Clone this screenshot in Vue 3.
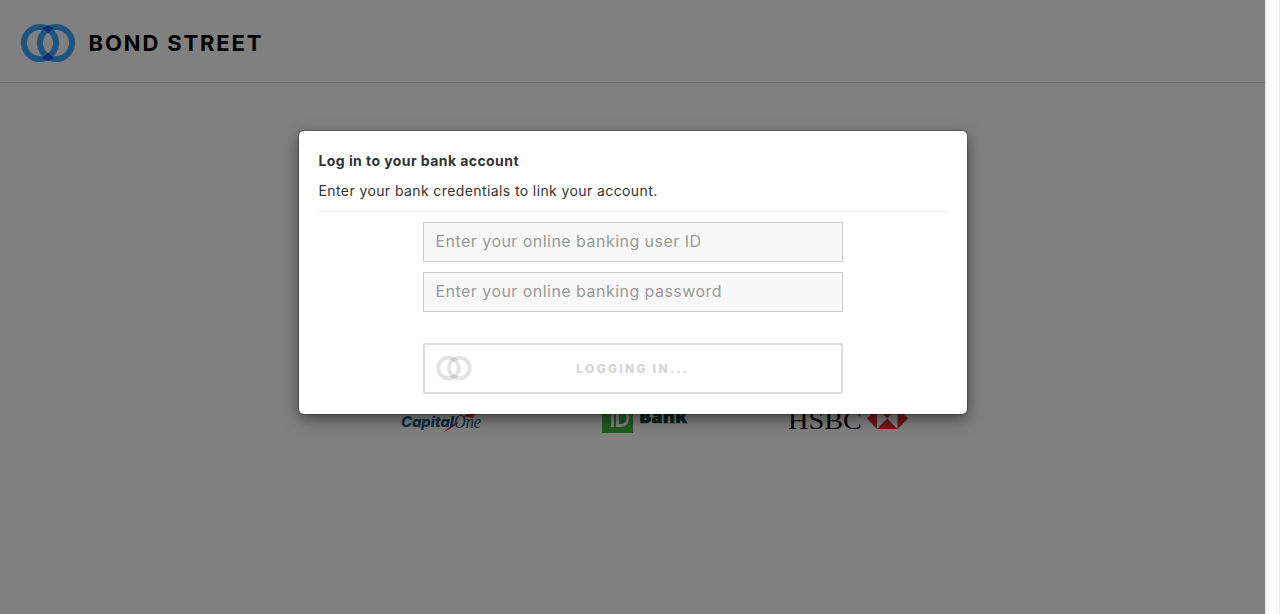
<script setup>
const fields = [
  { id: 'user', type: 'text', placeholder: 'Enter your online banking user ID' },
  { id: 'password', type: 'password', placeholder: 'Enter your online banking password' },
]
</script>

<template>
  <div class="window">
    <div class="page">
      <header class="header">
        <svg class="brand" width="250" height="40" viewBox="0 0 250 40">
          <g fill="none" stroke="#1f5380" stroke-width="6">
            <circle cx="20" cy="20" r="16" />
            <circle cx="36" cy="20" r="16" />
          </g>
          <g fill="#0b2e70">
            <path d="M28 2.300 L34 5 L28 10 L22 5 Z" />
            <path d="M28 37.700 L34 35 L28 30 L22 35 Z" />
          </g>
          <text x="68.500" y="28" textLength="173" class="brand-name">BOND STREET</text>
        </svg>
      </header>

      <main class="main">
        <section class="modal">
          <h1 class="title">Log in to your bank account</h1>
          <p class="intro">Enter your bank credentials to link your account.</p>
          <form class="form" @submit.prevent>
            <input v-for="f in fields" :key="f.id" class="field" :type="f.type" :placeholder="f.placeholder" />
            <button class="submit" type="button">
              <svg class="spinner" width="38" height="28" viewBox="0 0 38 28" fill="none" stroke="#000" stroke-opacity=".11" stroke-width="4">
                <circle cx="13.5" cy="14" r="10.3" />
                <circle cx="24.3" cy="14" r="10.3" />
              </svg>
              <span class="submit-label">LOGGING IN...</span>
            </button>
          </form>
        </section>

        <div class="banks">
          <svg width="84" height="36" viewBox="0 0 84 36">
            <path d="M42 32.500 Q48 27 56 22 L57 23.500 Q49 29 42 32.500Z M62 17 L66 14 L62 12 L80 9 Q74 13 72 18 Q67 16 62 17Z" fill="#68141b" />
            <text x="0" y="27" textLength="53" lengthAdjust="spacingAndGlyphs" class="cap-a">Capital</text>
            <text x="53" y="28" textLength="27" lengthAdjust="spacingAndGlyphs" class="cap-b">One</text>
          </svg>
          <svg class="td" width="88" height="36" viewBox="0 0 88 36">
            <rect x="0" y="2" width="31" height="31" fill="#205b20" />
            <path d="M5 9 H14 M10.500 9 V27 M15.500 9 V25.500 H19 Q26 25.500 26 17 Q26 10.500 19 10.500 H15.500" fill="none" stroke="#858585" stroke-width="2.800" />
            <text x="37" y="23" textLength="48" lengthAdjust="spacingAndGlyphs" class="td-name">Bank</text>
          </svg>
          <svg class="hsbc" width="124" height="36" viewBox="0 0 124 36">
            <text x="0" y="29" textLength="74" lengthAdjust="spacingAndGlyphs" class="hsbc-name">HSBC</text>
            <path d="M79 18.500 L89 8 V29Z M120 18.500 L109.500 8 V29Z M89 8 H109.500 L99.250 18.500Z M89 29 H109.500 L99.250 18.500Z" fill="#741318" />
          </svg>
        </div>
      </main>
    </div>
    <div class="scrollbar"></div>
  </div>
</template>

<style>
html, body { margin: 0; overflow: hidden; }
</style>

<style scoped>
* { box-sizing: border-box; }
.window { display: flex; width: 1280px; height: 614px; font-family: Inter, "Liberation Sans", sans-serif; }
.page { width: 1265px; height: 614px; background: #808080; overflow: hidden; }
.scrollbar { width: 15px; background: #fafafa; border-left: 1px solid #e7e7e7; border-right: 1px solid #ededed; }
.header { height: 83px; padding: 23px 20px 0; border-bottom: 1px solid #6d6d6d; }
.brand { display: block; }
.brand-name { font: 700 22px Inter, sans-serif; fill: #000; }
.main { display: flex; flex-direction: column; align-items: center; padding-top: 48px; }
.modal {
  position: relative; z-index: 1; width: 668px; height: 283px; padding: 20px; background: #fff;
  border-radius: 5px; box-shadow: 0 0 0 1px rgba(0, 0, 0, .2), 0 5px 15px rgba(0, 0, 0, .5);
}
.title { margin: 0; font-size: 14px; line-height: 20px; font-weight: 700; letter-spacing: .43px; color: #333; }
.intro { margin: 10px 0 0; height: 31px; font-size: 14px; line-height: 20px; letter-spacing: .4px; color: #333; border-bottom: 1px solid #eee; }
.form { display: flex; flex-direction: column; align-items: center; padding-top: 10px; }
.field {
  width: 420px; height: 40px; margin: 0 0 10px; padding: 0 12px 2px; border: 1px solid #ccc; border-radius: 0;
  background: #f8f8f8; font-family: inherit; font-size: 16px; letter-spacing: .46px; outline: none;
}
.field::placeholder { color: #999; opacity: 1; }
.submit {
  display: flex; align-items: center; width: 420px; height: 51px; margin-top: 21px; padding: 0 47px 0 10px;
  border: 2px solid #ddd; border-radius: 2px; background: #fff;
}
.spinner { flex: none; filter: blur(.4px); margin-top: -2px; }
.submit-label { flex: 1; text-align: center; font: 800 12px Inter, sans-serif; letter-spacing: 2.3px; color: #d5d5d5; }
.banks { display: flex; width: 512px; margin-top: -14px; margin-left: 49px; }
.banks svg { flex: none; }
.td { margin-left: 117px; }
.hsbc { margin-left: 98px; }
.cap-a { font: italic 800 14px Inter, sans-serif; fill: #0d2b46; }
.cap-b { font: italic 400 18px "Liberation Serif", serif; fill: #0d2b46; }
.td-name { font: 800 17px "Open Sans", sans-serif; fill: #062119; stroke: #062119; stroke-width: .5px; }
.hsbc-name { font: 400 25px "Liberation Serif", serif; fill: #080808; }
</style>
